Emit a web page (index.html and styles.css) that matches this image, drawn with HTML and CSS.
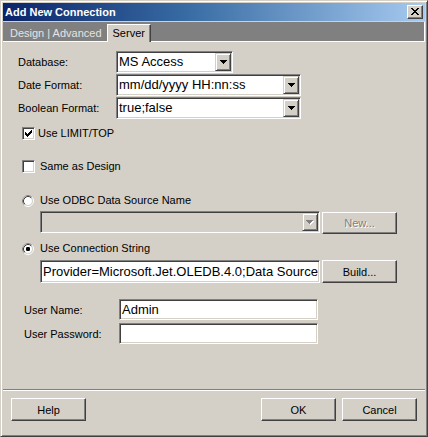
FILE: index.html
```
<!DOCTYPE html>
<html>
<head>
<meta charset="utf-8">
<title>Add New Connection</title>
<link rel="stylesheet" href="styles.css">
</head>
<body>
<div class="window">
  <div class="titlebar">
    <span class="title">Add New Connection</span>
    <div class="close">
      <svg width="8" height="7" viewBox="0 0 8 7"><path d="M0 0h2v1h-2z M6 0h2v1h-2z M1 1h2v1h-2z M5 1h2v1h-2z M2 2h4v1h-4z M3 3h2v1h-2z M2 4h4v1h-4z M1 5h2v1h-2z M5 5h2v1h-2z M0 6h2v1h-2z M6 6h2v1h-2z" fill="#000"/></svg>
    </div>
  </div>
  <div class="tabstrip">
    <span class="tablabel">Design | Advanced</span>
    <span class="tab">Server</span>
  </div>
  <div class="content">
    <div class="formgrid">
      <span class="label">Database:</span>
      <div class="combo combo-short"><span class="field-text">MS Access</span><span class="drop"><svg width="7" height="4" viewBox="0 0 7 4"><path d="M0 0h7v1h-1v1h-1v1h-1v1h-1v-1h-1v-1h-1v-1h-1z" fill="#000"/></svg></span></div>
      <span class="label">Date Format:</span>
      <div class="combo combo-long"><span class="field-text">mm/dd/yyyy HH:nn:ss</span><span class="drop"><svg width="7" height="4" viewBox="0 0 7 4"><path d="M0 0h7v1h-1v1h-1v1h-1v1h-1v-1h-1v-1h-1v-1h-1z" fill="#000"/></svg></span></div>
      <span class="label">Boolean Format:</span>
      <div class="combo combo-long"><span class="field-text">true;false</span><span class="drop"><svg width="7" height="4" viewBox="0 0 7 4"><path d="M0 0h7v1h-1v1h-1v1h-1v1h-1v-1h-1v-1h-1v-1h-1z" fill="#000"/></svg></span></div>
    </div>

    <div class="option opt-limit">
      <span class="checkbox"><svg width="7" height="7" viewBox="0 0 7 7"><path d="M6 0h1v1h-1z M5 1h2v1h-2z M0 2h1v1h-1z M4 2h3v1h-3z M0 3h2v1h-2z M3 3h3v1h-3z M0 4h5v1h-5z M1 5h3v1h-3z M2 6h1v1h-1z" fill="#000"/></svg></span>
      <span class="opt-text opt-text-tight">Use LIMIT/TOP</span>
    </div>

    <div class="option opt-same">
      <span class="checkbox"></span>
      <span class="opt-text">Same as Design</span>
    </div>

    <div class="option opt-odbc">
      <svg class="radio" width="12" height="12" viewBox="0 0 12 12">
        <circle cx="6" cy="6" r="5.5" fill="none" stroke="#fff"/>
        <path d="M2.11 9.89 A5.5 5.5 0 0 1 9.89 2.11" fill="none" stroke="#808080"/>
        <circle cx="6" cy="6" r="4.5" fill="#fff" stroke="#d4d0c8"/>
        <path d="M2.82 9.18 A4.5 4.5 0 0 1 9.18 2.82" fill="none" stroke="#404040"/>
      </svg>
      <span class="opt-text">Use ODBC Data Source Name</span>
    </div>

    <div class="field-row row-odbc">
      <div class="combo combo-wide combo-disabled"><span class="field-text"></span><span class="drop"><svg width="8" height="5" viewBox="0 0 8 5"><path d="M1 1h7v1h-1v1h-1v1h-1v1h-1v-1h-1v-1h-1v-1h-1z" fill="#fff"/><path d="M0 0h7v1h-1v1h-1v1h-1v1h-1v-1h-1v-1h-1v-1h-1z" fill="#808080"/></svg></span></div>
      <div class="button button-disabled button-new">New...</div>
    </div>

    <div class="option opt-conn">
      <svg class="radio" width="12" height="12" viewBox="0 0 12 12">
        <circle cx="6" cy="6" r="5.5" fill="none" stroke="#fff"/>
        <path d="M2.11 9.89 A5.5 5.5 0 0 1 9.89 2.11" fill="none" stroke="#808080"/>
        <circle cx="6" cy="6" r="4.5" fill="#fff" stroke="#d4d0c8"/>
        <path d="M2.82 9.18 A4.5 4.5 0 0 1 9.18 2.82" fill="none" stroke="#404040"/>
        <rect x="4" y="4" width="4" height="4" rx="1.2" fill="#000"/>
      </svg>
      <span class="opt-text">Use Connection String</span>
    </div>

    <div class="field-row row-conn">
      <div class="textbox textbox-wide"><span class="field-text">Provider=Microsoft.Jet.OLEDB.4.0;Data Source</span></div>
      <div class="button button-build">Build...</div>
    </div>

    <div class="usergrid">
      <span class="label">User Name:</span>
      <div class="textbox textbox-user"><span class="field-text">Admin</span></div>
      <span class="label">User Password:</span>
      <div class="textbox textbox-user"><span class="field-text"></span></div>
    </div>
  </div>
  <div class="footer">
    <div class="button button-help">Help</div>
    <div class="button">OK</div>
    <div class="button">Cancel</div>
  </div>
</div>
</body>
</html>
```

FILE: styles.css
```
html, body {
  margin: 0;
  padding: 0;
  background: #d4d0c8;
}

body {
  font-family: "Liberation Sans", Arial, sans-serif;
  font-size: 11px;
  color: #000;
}

.window {
  width: 428px;
  height: 437px;
  box-sizing: border-box;
  background: #d4d0c8;
  border: 1px solid;
  border-color: #d4d0c8 #404040 #404040 #d4d0c8;
  box-shadow: inset 1px 1px #fff, inset -1px -1px #808080;
  padding: 2px;
  display: flex;
  flex-direction: column;
}

.titlebar {
  height: 18px;
  flex: none;
  margin-bottom: 1px;
  background: linear-gradient(to right, #0a246a 0%, #3a6ea5 45%, #a6caf0 100%);
  display: flex;
  align-items: center;
  justify-content: space-between;
  padding: 0 2px 0 2px;
}

.title {
  color: #fff;
  font-weight: bold;
  font-size: 11px;
  line-height: 18px;
  white-space: nowrap;
}

.close {
  width: 16px;
  height: 14px;
  box-sizing: border-box;
  background: #d4d0c8;
  border: 1px solid;
  border-color: #fff #404040 #404040 #fff;
  box-shadow: inset -1px -1px #808080;
  display: flex;
  align-items: center;
  justify-content: center;
  padding-bottom: 1px;
}

.close svg {
  display: block;
}

.tabstrip {
  height: 19px;
  flex: none;
  background: #808080;
  border-bottom: 1px solid #fff;
  border-right: 1px solid #fff;
  display: flex;
  align-items: flex-end;
}

.tablabel {
  height: 18px;
  box-sizing: border-box;
  margin-bottom: -1px;
  border-top: 1px solid transparent;
  padding-left: 7px;
  line-height: 16px;
  color: #e4e4e4;
  white-space: nowrap;
}

.tab {
  height: 18px;
  box-sizing: border-box;
  margin-bottom: -1px;
  margin-left: 5px;
  padding: 0 5px 0 5px;
  background: #d4d0c8;
  border-top: 1px solid #fff;
  border-left: 1px solid #fff;
  border-right: 1px solid #404040;
  box-shadow: inset -1px 0 #808080;
  line-height: 16px;
  color: #000;
  white-space: nowrap;
}

.content {
  flex: 1;
  padding: 9px 0 0 15px;
  display: flex;
  flex-direction: column;
  align-items: flex-start;
}

.formgrid {
  display: grid;
  grid-template-columns: 98px auto;
  grid-auto-rows: 22px;
  row-gap: 1px;
  align-items: center;
}

.label {
  white-space: nowrap;
}

.combo,
.textbox {
  box-sizing: border-box;
  display: flex;
  background: #fff;
  border: 1px solid;
  border-color: #808080 #fff #fff #808080;
  box-shadow: inset 1px 1px #404040, inset -1px -1px #d4d0c8;
  padding: 1px;
  overflow: hidden;
}

.combo {
  height: 22px;
}

.combo-short {
  width: 117px;
}

.combo-long {
  width: 185px;
}

.combo-wide {
  width: 280px;
}

.combo-disabled {
  background: #d4d0c8;
}

.field-text {
  flex: 1;
  min-width: 0;
  font-size: 13px;
  line-height: 18px;
  padding-left: 1px;
  white-space: nowrap;
  overflow: hidden;
}

.drop {
  flex: none;
  width: 16px;
  height: 18px;
  box-sizing: border-box;
  background: #d4d0c8;
  border: 1px solid;
  border-color: #d4d0c8 #404040 #404040 #d4d0c8;
  box-shadow: inset 1px 1px #fff, inset -1px -1px #808080;
  display: flex;
  align-items: center;
  justify-content: center;
}

.drop svg {
  display: block;
}

.option {
  display: flex;
  align-items: center;
  height: 13px;
  margin-left: 4px;
  white-space: nowrap;
}

.opt-limit {
  margin-top: 8px;
}

.opt-same {
  margin-top: 20px;
}

.opt-odbc {
  margin-top: 21px;
}

.opt-conn {
  margin-top: 8px;
}

.checkbox {
  width: 13px;
  height: 13px;
  box-sizing: border-box;
  background: #fff;
  border: 1px solid;
  border-color: #808080 #fff #fff #808080;
  box-shadow: inset 1px 1px #404040, inset -1px -1px #d4d0c8;
  display: flex;
  align-items: center;
  justify-content: center;
}

.checkbox svg {
  display: block;
}

.radio {
  display: block;
  flex: none;
}

.opt-text {
  margin-left: 5px;
  line-height: 13px;
}

.opt-text-tight {
  margin-left: 3px;
}

.option .radio + .opt-text {
  margin-left: 6px;
}

.field-row {
  display: flex;
  align-items: flex-start;
  gap: 2px;
  margin-left: 22px;
}

.row-odbc {
  margin-top: 4px;
}

.row-conn {
  margin-top: 5px;
}

.textbox-wide {
  width: 280px;
  height: 23px;
}

.textbox-wide .field-text {
  line-height: 19px;
}

.button {
  width: 75px;
  height: 23px;
  box-sizing: border-box;
  background: #d4d0c8;
  border: 1px solid;
  border-color: #fff #404040 #404040 #fff;
  box-shadow: inset -1px -1px #808080;
  display: flex;
  align-items: center;
  justify-content: center;
  white-space: nowrap;
  font-size: 11px;
  color: #000;
}

.button-new {
  height: 22px;
  margin-top: 1px;
}

.button-disabled {
  color: #808080;
  text-shadow: 1px 1px #fff;
}

.usergrid {
  display: grid;
  grid-template-columns: 95px 199px;
  grid-auto-rows: 21px;
  row-gap: 3px;
  align-items: center;
  margin-top: 16px;
  margin-left: 6px;
}

.textbox-user {
  width: 199px;
  height: 21px;
}

.textbox-user .field-text {
  line-height: 17px;
}

.footer {
  flex: none;
  border-top: 1px solid #808080;
  box-shadow: inset 0 1px #fff;
  padding: 8px 8px 13px 8px;
  display: flex;
  gap: 6px;
}

.button-help {
  margin-right: auto;
}
```
